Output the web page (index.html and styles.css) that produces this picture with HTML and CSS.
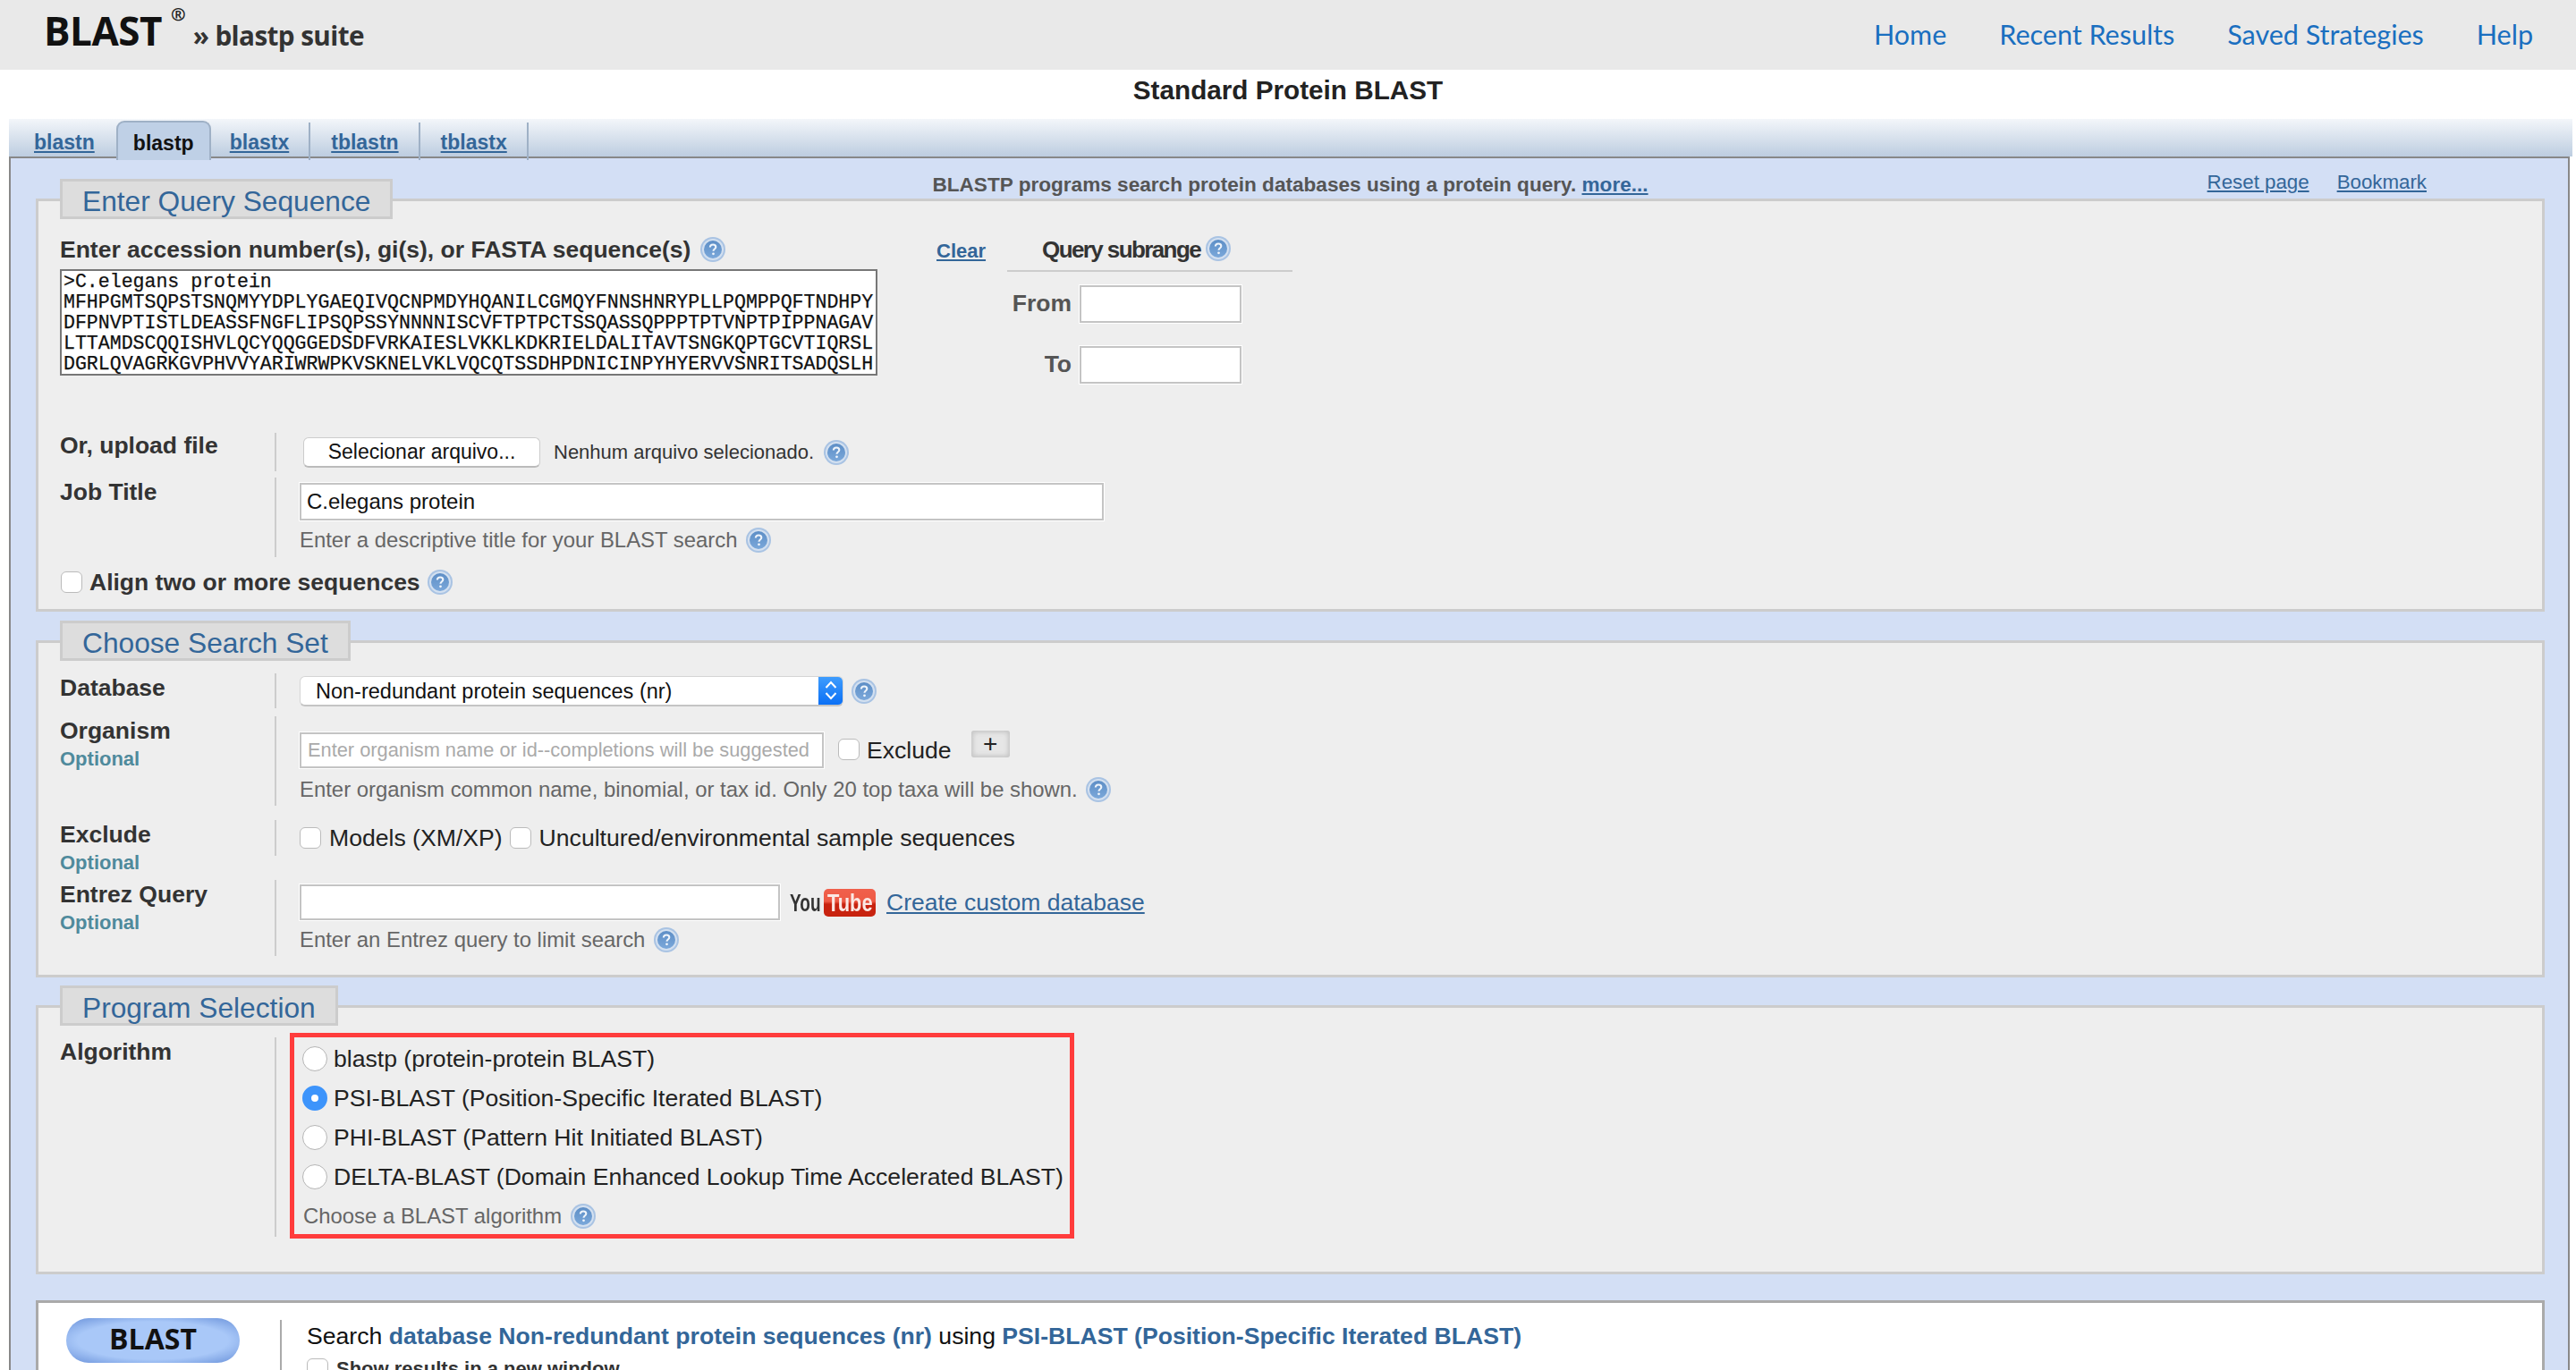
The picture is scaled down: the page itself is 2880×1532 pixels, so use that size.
FILE: index.html
```html
<!DOCTYPE html>
<html lang="en">
<head>
<meta charset="utf-8">
<title>Standard Protein BLAST</title>
<link rel="stylesheet" href="styles.css">
</head>
<body>
<svg class="defs" width="0" height="0" aria-hidden="true">
  <defs>
    <linearGradient id="hg" x1="0" y1="0" x2="0" y2="1">
      <stop offset="0" stop-color="#5d8ec6"/>
      <stop offset="1" stop-color="#7ba8da"/>
    </linearGradient>
    <symbol id="help" viewBox="0 0 28 28">
      <circle cx="14" cy="14" r="14" fill="#a9c3e3"/>
      <circle cx="14" cy="14" r="12" fill="#d3e0f0"/>
      <circle cx="14" cy="14" r="10" fill="url(#hg)"/>
      <path d="M10.800 11.500c.2-2 1.500-3 3.300-3 1.900 0 3.200 1.100 3.200 2.700 0 2.300-2.800 2.400-2.800 4.600" fill="none" stroke="#eef4fb" stroke-width="2.100"/>
      <circle cx="14.500" cy="18.800" r="1.400" fill="#eef4fb"/>
    </symbol>
  </defs>
</svg>

<header class="top">
  <div class="brand">
    <span class="brand-name">BLAST</span><span class="brand-reg">®</span>
    <span class="brand-sub">» blastp suite</span>
  </div>
  <nav class="topnav">
    <a href="#">Home</a>
    <a href="#">Recent Results</a>
    <a href="#">Saved Strategies</a>
    <a href="#">Help</a>
  </nav>
</header>

<h1 class="title">Standard Protein BLAST</h1>

<div class="strip">
  <a class="tab" href="#">blastn</a>
  <a class="tab active" href="#">blastp</a>
  <a class="tab" href="#">blastx</a>
  <a class="tab" href="#">tblastn</a>
  <a class="tab" href="#">tblastx</a>
</div>

<main class="panel">
  <div class="intro">
    <span></span>
    <p class="intro-text">BLASTP programs search protein databases using a protein query. <a href="#">more...</a></p>
    <div class="intro-links"><a href="#">Reset page</a><a href="#">Bookmark</a></div>
  </div>

  <section class="box box-query">
    <h2 class="legend">Enter Query Sequence</h2>
    <div class="query">
      <div class="query-main">
        <div class="qlabel">Enter accession number(s), gi(s), or FASTA sequence(s) <svg class="help"><use href="#help"/></svg></div>
        <pre class="seq">&gt;C.elegans protein
MFHPGMTSQPSTSNQMYYDPLYGAEQIVQCNPMDYHQANILCGMQYFNNSHNRYPLLPQMPPQFTNDHPY
DFPNVPTISTLDEASSFNGFLIPSQPSSYNNNNISCVFTPTPCTSSQASSQPPPTPTVNPTPIPPNAGAV
LTTAMDSCQQISHVLQCYQQGGEDSDFVRKAIESLVKKLKDKRIELDALITAVTSNGKQPTGCVTIQRSL
DGRLQVAGRKGVPHVVYARIWRWPKVSKNELVKLVQCQTSSDHPDNICINPYHYERVVSNRITSADQSLH</pre>
      </div>
      <a class="clear" href="#">Clear</a>
      <div class="subrange">
        <div class="sub-head"><span>Query subrange</span> <svg class="help"><use href="#help"/></svg></div>
        <div class="sub-row"><label>From</label><input class="text sub-input" type="text"></div>
        <div class="sub-row"><label>To</label><input class="text sub-input" type="text"></div>
      </div>
    </div>

    <div class="frow frow-upload">
      <div class="flabel">Or, upload file</div>
      <div class="ctl ctl-upload">
        <button class="filebtn" type="button">Selecionar arquivo...</button>
        <span class="filename">Nenhum arquivo selecionado.</span>
        <svg class="help"><use href="#help"/></svg>
      </div>
    </div>
    <div class="frow frow-job">
      <div class="flabel">Job Title</div>
      <div class="ctl ctl-job">
        <input class="text job-input" type="text" value="C.elegans protein">
        <div class="hint hint-job">Enter a descriptive title for your BLAST search <svg class="help"><use href="#help"/></svg></div>
      </div>
    </div>
    <label class="align"><input class="check" type="checkbox"><span>Align two or more sequences</span> <svg class="help"><use href="#help"/></svg></label>
  </section>

  <section class="box box-search">
    <h2 class="legend">Choose Search Set</h2>
    <div class="frow frow-db">
      <div class="flabel">Database</div>
      <div class="ctl ctl-db">
        <div class="select"><span class="select-text">Non-redundant protein sequences (nr)</span>
          <span class="select-arrow"><svg width="16" height="26" viewBox="0 0 16 26"><path d="M2.500 10l5.500-6 5.500 6M2.500 16l5.500 6 5.500-6" fill="none" stroke="#fff" stroke-width="2"/></svg></span>
        </div>
        <svg class="help"><use href="#help"/></svg>
      </div>
    </div>
    <div class="frow frow-org">
      <div class="flabel">Organism<div class="optional">Optional</div></div>
      <div class="ctl ctl-org">
        <div class="org-line">
          <input class="text org-input" type="text" placeholder="Enter organism name or id--completions will be suggested">
          <input class="check" type="checkbox">
          <span class="opt-text">Exclude</span>
          <button class="plus" type="button">+</button>
        </div>
        <div class="hint hint-org">Enter organism common name, binomial, or tax id. Only 20 top taxa will be shown. <svg class="help"><use href="#help"/></svg></div>
      </div>
    </div>
    <div class="frow frow-ex">
      <div class="flabel">Exclude<div class="optional">Optional</div></div>
      <div class="ctl ctl-ex">
        <input class="check" type="checkbox"><span class="opt-text">Models (XM/XP)</span>
        <input class="check" type="checkbox"><span class="opt-text">Uncultured/environmental sample sequences</span>
      </div>
    </div>
    <div class="frow frow-ent">
      <div class="flabel">Entrez Query<div class="optional">Optional</div></div>
      <div class="ctl ctl-ent">
        <div class="ent-line">
          <input class="text ent-input" type="text">
          <span class="yt"><span class="yt-you"><span class="yt-inner">You</span></span><span class="yt-tube"><span class="yt-inner">Tube</span></span></span>
          <a class="custom" href="#">Create custom database</a>
        </div>
        <div class="hint hint-ent">Enter an Entrez query to limit search <svg class="help"><use href="#help"/></svg></div>
      </div>
    </div>
  </section>

  <section class="box box-program">
    <h2 class="legend">Program Selection</h2>
    <div class="frow frow-alg">
      <div class="flabel">Algorithm</div>
      <div class="ctl ctl-alg">
        <div class="redbox"></div>
        <label class="radio-line"><input class="radio" type="radio" name="alg"><span>blastp (protein-protein BLAST)</span></label>
        <label class="radio-line"><input class="radio" type="radio" name="alg" checked><span>PSI-BLAST (Position-Specific Iterated BLAST)</span></label>
        <label class="radio-line"><input class="radio" type="radio" name="alg"><span>PHI-BLAST (Pattern Hit Initiated BLAST)</span></label>
        <label class="radio-line"><input class="radio" type="radio" name="alg"><span>DELTA-BLAST (Domain Enhanced Lookup Time Accelerated BLAST)</span></label>
        <div class="hint hint-alg">Choose a BLAST algorithm <svg class="help"><use href="#help"/></svg></div>
      </div>
    </div>
  </section>

  <section class="submit">
    <button class="blastbtn" type="button">BLAST</button>
    <div class="submit-info">
      <div class="summary">Search <b>database Non-redundant protein sequences (nr)</b> using <b>PSI-BLAST (Position-Specific Iterated BLAST)</b></div>
      <label class="newwin"><input class="check" type="checkbox"><span>Show results in a new window</span></label>
    </div>
  </section>
</main>
</body>
</html>
```

FILE: styles.css
```css
* { box-sizing: border-box; }
html, body { margin: 0; height: 1532px; overflow: hidden; background: #fff; }
body { font-family: "Liberation Sans", Arial, sans-serif; color: #333; }
a { color: #336699; }
.defs { position: absolute; }

.top { height: 78px; background: #e9e9e9; display: flex; justify-content: space-between; align-items: flex-start; }
.brand { display: flex; align-items: baseline; margin-left: 49px; height: 78px; font-family: "Open Sans", sans-serif; }
.brand-name { font-size: 44px; font-weight: 700; color: #111; line-height: 68px; letter-spacing: -.5px; }
.brand-reg { font-size: 20px; font-weight: 700; color: #222; margin-left: 10px; position: relative; top: -28px; }
.brand-sub { font-size: 29.700px; font-weight: 700; color: #333; margin-left: 8px; letter-spacing: -.6px; }
.topnav { display: flex; gap: 59px; margin-right: 48px; padding-top: 18px; font-family: "Lato", sans-serif; font-size: 30.500px; line-height: 40px; }
.topnav a { color: #1a6fc0; text-decoration: none; }

.title { margin: 0; height: 55px; padding-top: 5px; text-align: center; font-size: 29.700px; line-height: 36px; font-weight: 700; color: #222; }

.strip { height: 42px; margin: 0 4px 0 10px; padding-left: 28px; display: flex; align-items: flex-end; background: linear-gradient(#f3f6fa, #bdcde0); }
.tab { height: 40px; margin-right: 47px; font-size: 23px; font-weight: 700; line-height: 48px; color: #336699; position: relative; }
.tab::after { content: ""; position: absolute; right: -24px; top: 2px; height: 42px; width: 2px; background: #9fb1c6; z-index: 2; }
.tab:first-child { margin-right: 24px; }
.tab:first-child::after { display: none; }
.tab.active { width: 106px; height: 44px; margin: 0 21px -4px 0; text-align: center; color: #111; text-decoration: none; background: #bfd0e6; border: 2px solid #9fb1c6; border-bottom: 0; border-radius: 9px 9px 0 0; z-index: 3; line-height: 46px; }
.tab.active::after { display: none; }

.panel { margin: 0 7px 0 10px; height: 1357px; padding: 0 26px 0 28px; background: #d3dff5; border: 2px solid #888; border-bottom: 0; overflow: hidden; }

.intro { height: 45px; display: grid; grid-template-columns: 1fr auto 1fr; align-items: start; }
.intro-text { margin: 17px 0 0; font-size: 22.600px; line-height: 26px; font-weight: 700; color: #555; white-space: nowrap; }
.intro-links { margin-top: 14px; padding-right: 132px; display: flex; justify-content: flex-end; gap: 31px; font-size: 22.300px; line-height: 26px; }

.box { background: #eee; border: 3px solid #ccc; margin-top: 32px; padding: 0 0 0 24px; }
.box-query { margin-top: 0; padding-bottom: 16px; }
.box-search { padding-bottom: 21px; }
.box-program { margin-top: 31px; padding-bottom: 39px; }
.legend { margin: -25px 0 0; height: 45px; width: fit-content; padding: 0 22px; background: #ddd; border: 3px solid #ccc; font-size: 31.700px; line-height: 45px; font-weight: 400; color: #336699; }

.help { width: 28px; height: 28px; vertical-align: middle; }
.query { display: flex; align-items: flex-start; height: 175px; }
.query-main { width: 914px; }
.qlabel { margin-top: 19px; height: 37px; font-size: 26.500px; line-height: 30px; font-weight: 700; white-space: nowrap; display: flex; align-items: flex-start; gap: 11px; }
.qlabel .help { margin-top: 1px; }
.seq { margin: 0; height: 119px; padding: 1px 2px; overflow: hidden; background: #fff; border: 2px solid #777; font-family: "Liberation Mono", monospace; font-size: 21.550px; line-height: 23px; color: #111; -webkit-text-stroke: .25px #111; }
.clear { margin: 22px 0 0 66px; font-size: 22px; line-height: 28px; font-weight: 700; }
.subrange { width: 319px; margin: 19px 0 0 24px; }
.sub-head { height: 40px; padding-left: 39px; border-bottom: 2px solid #ccc; display: flex; gap: 6px; font-size: 26px; line-height: 30px; font-weight: 700; letter-spacing: -1.600px; white-space: nowrap; }
.sub-row { display: flex; justify-content: flex-start; align-items: center; height: 42px; margin-top: 15px; width: 262px; }
.sub-row + .sub-row { margin-top: 26px; }
.sub-row label { width: 72px; text-align: right; font-size: 26.500px; font-weight: 700; color: #555; margin-top: -2px; }
.text { display: block; background: #fff; border: 2px solid #c4c4c4; outline: 1px solid #fff; font-family: "Liberation Sans", Arial, sans-serif; font-size: 24px; color: #111; padding: 0 6px; border-radius: 0; }
.sub-input { width: 181px; height: 42px; margin-left: 9px; }

.frow { display: grid; grid-template-columns: 240px 1fr; align-items: start; }
.flabel { font-size: 26.500px; line-height: 32px; font-weight: 700; white-space: nowrap; }
.optional { font-size: 22px; line-height: 31px; color: #4f8a9c; }
.ctl { border-left: 2px solid #ccc; padding-left: 26px; }
.frow-upload { margin-top: 64px; }
.frow-upload .flabel { margin-top: -2px; }
.ctl-upload { height: 43px; display: flex; align-items: center; }
.filebtn { width: 265px; height: 34px; margin-left: 4px; padding: 0; background: #fff; border: 1px solid #ccc; border-bottom: 2px solid #bbb; border-radius: 6px; font-family: "Liberation Sans", Arial, sans-serif; font-size: 23px; color: #111; }
.filename { margin-left: 15px; font-size: 22px; color: #333; }
.ctl-upload .help { margin-left: 11px; }
.frow-job { margin-top: 7px; }
.ctl-job { height: 89px; padding-top: 6px; }
.job-input { width: 899px; height: 42px; }
.hint { font-size: 23.900px; line-height: 28px; color: #666; white-space: nowrap; }
.hint .help { margin-left: 3px; margin-top: -3px; }
.hint-job { margin-top: 8px; }
.check { appearance: none; width: 24px; height: 24px; margin: 0; background: #fff; border: 1.500px solid #bbb; border-radius: 6px; flex: none; }
.align { margin: 14px 0 0 1px; display: flex; align-items: center; height: 28px; font-size: 26.500px; font-weight: 700; gap: 8px; }

.frow-db { margin-top: 14px; }
.ctl-db { height: 39px; display: flex; align-items: center; gap: 9px; }
.select { width: 608px; height: 34px; display: flex; justify-content: space-between; background: #fff; border: 1px solid #d5d5d5; border-bottom: 2px solid #c4c4c4; border-radius: 6px; overflow: hidden; }
.select-text { padding-left: 17px; font-size: 23.500px; line-height: 32px; color: #111; }
.select-arrow { width: 27px; background: linear-gradient(#3e9cfd, #0b70f5); display: flex; align-items: center; justify-content: center; }
.frow-org { margin-top: 9px; }
.ctl-org { height: 100px; padding-top: 16px; }
.org-line { display: flex; align-items: flex-start; height: 42px; }
.org-input { width: 586px; height: 40px; margin-top: 2px; padding: 0 7px; font-size: 21.800px; }
.org-input::placeholder { color: #aaa; opacity: 1; }
.org-line .check { margin: 9px 0 0 16px; }
.opt-text { font-size: 26.600px; line-height: 28px; color: #222; white-space: nowrap; }
.org-line .opt-text { margin: 8px 0 0 8px; }
.plus { width: 43px; height: 30px; margin-left: 22px; padding: 0; background: #e6e6e6; border: 0; border-radius: 3px; box-shadow: inset 0 0 5px 2px #c4c4c4; font-family: "Liberation Sans", Arial, sans-serif; font-size: 28px; line-height: 24px; color: #222; }
.hint-org { margin-top: 10px; }
.frow-ex { margin-top: 16px; }
.ctl-ex { height: 40px; display: flex; align-items: center; }
.ctl-ex .opt-text { margin: 0 8px 0 9px; }
.frow-ent { margin-top: 4px; }
.ctl-ent { height: 85px; padding-top: 5px; }
.ent-line { display: flex; align-items: center; height: 40px; }
.ent-input { width: 537px; height: 40px; }
.yt { display: flex; align-items: stretch; height: 31px; margin-left: 11px; filter: blur(.6px); font-family: "Liberation Sans", Arial, sans-serif; font-weight: 700; font-size: 28px; line-height: 31px; }
.yt-inner { display: inline-block; transform-origin: left center; }
.yt-you { width: 38px; color: #333; }
.yt-you .yt-inner { transform: scaleX(.68); }
.yt-tube { width: 58px; padding-left: 4px; border-radius: 5px; background: linear-gradient(#f0604c 0, #ee5a45 45%, #c8230f 55%, #c8230f); color: #fbe8e4; }
.yt-tube .yt-inner { transform: scaleX(.78); }
.custom { margin-left: 12px; font-size: 26.500px; line-height: 30px; white-space: nowrap; }
.hint-ent { margin-top: 8px; }

.frow-alg { margin-top: 13px; }
.ctl-alg { height: 223px; padding: 2px 0 0 29px; position: relative; }
.redbox { position: absolute; left: 15px; top: -5px; width: 877px; height: 230px; border: 5px solid #ff3c3c; pointer-events: none; }
.radio-line { display: flex; align-items: center; height: 44px; gap: 7px; font-size: 26.600px; color: #222; white-space: nowrap; }
.radio { appearance: none; flex: none; width: 28px; height: 28px; margin: 0; background: #fff; border: 1.500px solid #b5b5b5; border-radius: 50%; }
.radio:checked { border: 10px solid #3d94fb; }
.hint-alg { height: 44px; line-height: 44px; padding-left: 1px; }

.submit { margin-top: 29px; height: 200px; background: #fff; border: 3px solid #aaa; display: flex; align-items: flex-start; }
.blastbtn { width: 194px; height: 50px; margin: 17px 0 0 31px; padding: 0 0 4px; border: 0; border-radius: 25px; background: radial-gradient(ellipse 62% 60% at 50% 50%, #a9c8f8 70%, #7fa4e4 100%); font-family: "Open Sans", sans-serif; font-size: 32px; line-height: 42px; font-weight: 700; color: #111; }
.submit-info { margin: 19px 0 0 45px; padding-left: 28px; border-left: 2px solid #aaa; height: 150px; }
.summary { font-size: 26.600px; line-height: 36px; color: #111; white-space: nowrap; }
.summary b { color: #336699; }
.newwin { display: flex; align-items: center; gap: 9px; margin-top: 6px; font-size: 22px; font-weight: 700; }
```
